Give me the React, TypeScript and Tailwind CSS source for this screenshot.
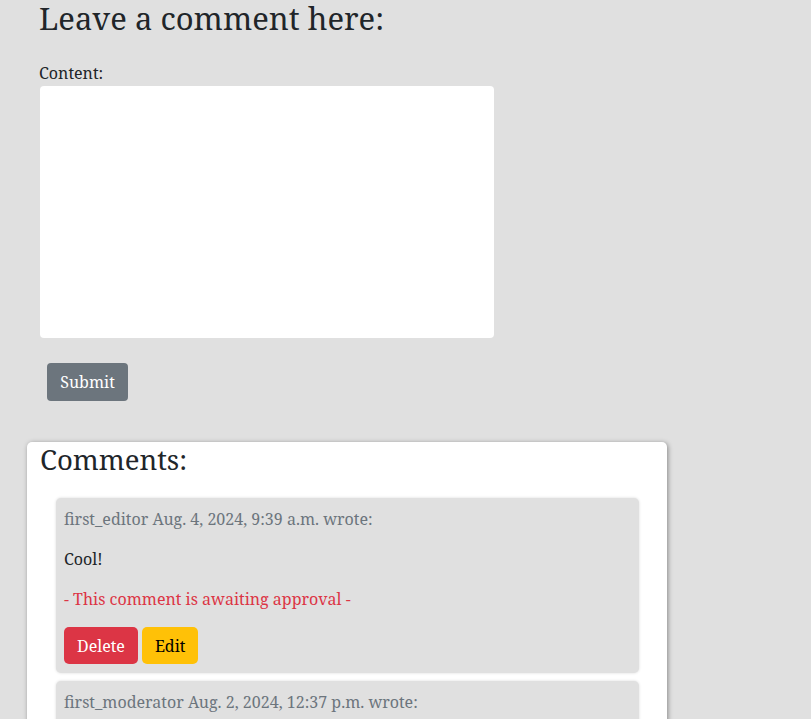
import React from 'react';

interface CommentItem {
  author: string;
  date: string;
  body: string;
  approved: boolean;
}

const comments: CommentItem[] = [
  { author: 'first_editor', date: 'Aug. 4, 2024, 9:39 a.m.', body: 'Cool!', approved: false },
  { author: 'first_moderator', date: 'Aug. 2, 2024, 12:37 p.m.', body: 'Nice post, thanks for sharing.', approved: true },
];

const CommentBox: React.FC<{ comment: CommentItem }> = ({ comment }) => (
  <div className="bg-[#e0e0e0] rounded-[5px] shadow-[0_0_3px_rgba(0,0,0,0.15)] px-2 pt-[9px] pb-[9px] mb-2">
    <p className="text-[#6c757d] leading-6 mb-4">
      {comment.author} {comment.date} wrote:
    </p>
    <p className="leading-6 mb-4">{comment.body}</p>
    {!comment.approved && (
      <p className="text-[#dc3545] leading-6 mb-4">- This comment is awaiting approval -</p>
    )}
    <div className="flex gap-1">
      <button className="bg-[#dc3545] text-white rounded-[5px] h-[37px] px-[13px]">Delete</button>
      <button className="bg-[#ffc107] text-[#000] rounded-[5px] h-[37px] px-[13px]">Edit</button>
    </div>
  </div>
);

export default function App() {
  return (
    <div
      className="min-h-screen bg-[#e0e0e0] text-[#212529] text-base"
      style={{ fontFamily: '"Noto Serif", "DejaVu Serif", serif' }}
    >
      <div className="pl-[39px] pt-0">
        <h1 className="text-[31px] leading-[41px] -mt-[2px] mb-[22px]">Leave a comment here:</h1>
        <form>
          <label className="block leading-6 mb-px">Content:</label>
          <textarea className="block w-[454px] h-[252px] bg-white rounded-[4px] ml-px resize-none" />
          <button
            type="button"
            className="mt-[25px] ml-[8px] bg-[#6c757d] text-white rounded-[4px] h-[38px] w-[81px]"
          >
            Submit
          </button>
        </form>
      </div>

      <div className="ml-[27px] mt-[41px] w-[640px] bg-white rounded-[5px] shadow-[1px_1px_5px_rgba(0,0,0,0.4)] pl-[13px] pr-[28px] pt-[1px] pb-2">
        <h2 className="text-[27.5px] leading-[34px] mb-[21px]">Comments:</h2>
        <div className="ml-[16px]">
          {comments.map((c, i) => (
            <CommentBox key={i} comment={c} />
          ))}
        </div>
      </div>
    </div>
  );
}
